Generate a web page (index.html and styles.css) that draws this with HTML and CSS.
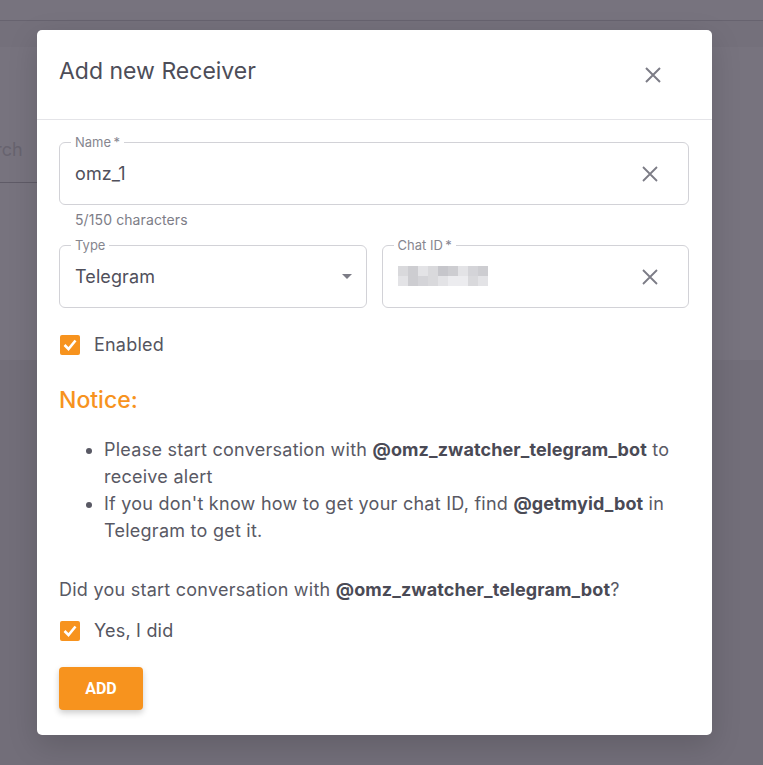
FILE: index.html
```html
<!DOCTYPE html>
<html>
<head>
<meta charset="utf-8">
<link rel="stylesheet" href="styles.css">
</head>
<body>
<div class="page">
  <div class="appbar"></div>
  <div class="subbar"></div>
  <div class="panel">
    <div class="search"><span class="search-text">Search</span></div>
  </div>
</div>

<div class="dialog">
  <div class="dialog-header">
    <h2 class="dialog-title">Add new Receiver</h2>
    <svg class="close-icon" width="24" height="24" viewBox="0 0 24 24"><path d="M5 5L19 19M19 5L5 19" stroke="#7c7c86" stroke-width="2" fill="none"/></svg>
  </div>
  <div class="dialog-body">
    <div class="field">
      <span class="field-label">Name&thinsp;*</span>
      <span class="field-value">omz_1</span>
      <svg class="clear-icon" width="20" height="20" viewBox="0 0 20 20"><path d="M3 3L17 17M17 3L3 17" stroke="#7c7c86" stroke-width="1.8" fill="none"/></svg>
    </div>
    <div class="helper">5/150 characters</div>
    <div class="field-row">
      <div class="field">
        <span class="field-label">Type</span>
        <span class="field-value">Telegram</span>
        <span class="select-arrow"></span>
      </div>
      <div class="field">
        <span class="field-label">Chat ID&thinsp;*</span>
        <span class="blur">
          <span class="px c1"></span><span class="px c2"></span><span class="px c3"></span><span class="px c1"></span><span class="px c4"></span><span class="px c2"></span><span class="px c3"></span><span class="px c5"></span><span class="px c2"></span>
          <span class="px c3"></span><span class="px c2"></span><span class="px c5"></span><span class="px c1"></span><span class="px c3"></span><span class="px c6"></span><span class="px c6"></span><span class="px c1"></span><span class="px c3"></span>
        </span>
        <svg class="clear-icon" width="20" height="20" viewBox="0 0 20 20"><path d="M3 3L17 17M17 3L3 17" stroke="#7c7c86" stroke-width="1.8" fill="none"/></svg>
      </div>
    </div>
    <label class="check-row first">
      <span class="checkbox"><svg width="20" height="20" viewBox="0 0 20 20"><path d="M4.5 10L8.5 14L15.5 5.5" stroke="#fff" stroke-width="2.6" fill="none"/></svg></span>
      <span class="check-label">Enabled</span>
    </label>
    <h3 class="notice">Notice:</h3>
    <ul class="notes">
      <li>Please start conversation with <b>@omz_zwatcher_telegram_bot</b> to receive alert</li>
      <li>If you don't know how to get your chat ID, find <b>@getmyid_bot</b> in Telegram to get it.</li>
    </ul>
    <p class="question">Did you start conversation with <b>@omz_zwatcher_telegram_bot</b>?</p>
    <label class="check-row second">
      <span class="checkbox"><svg width="20" height="20" viewBox="0 0 20 20"><path d="M4.5 10L8.5 14L15.5 5.5" stroke="#fff" stroke-width="2.6" fill="none"/></svg></span>
      <span class="check-label">Yes, I did</span>
    </label>
    <button class="add-btn">ADD</button>
  </div>
</div>
</body>
</html>
```
FILE: styles.css
```css
* { box-sizing: border-box; }
html, body { margin: 0; padding: 0; }
body {
  width: 763px;
  height: 765px;
  overflow: hidden;
  background: #726e79;
  font-family: Inter, "Noto Sans", sans-serif;
  position: relative;
}
.page { display: flex; flex-direction: column; }
.appbar { height: 21px; background: #77737e; border-bottom: 1px solid #67636f; }
.subbar { height: 26px; background: #74707b; }
.panel { height: 313px; background: #77737e; padding-top: 80px; }
.search { width: 40px; height: 56px; border-bottom: 1px solid #5f5b67; position: relative; }
.search-text {
  position: absolute; left: -37px; top: 12px;
  font-size: 18px; color: #67636f;
}

.dialog {
  position: absolute;
  left: 37px; top: 30px;
  width: 675px; height: 705px;
  background: #fff;
  border-radius: 5px;
  box-shadow: 0 10px 30px rgba(0,0,0,0.15);
}
.dialog-header {
  height: 90px;
  border-bottom: 1px solid #e4e4e8;
  display: flex;
  align-items: center;
  justify-content: space-between;
  padding: 0 47px 0 22px;
}
.dialog-title {
  margin: 0 0 8px;
  font-size: 23px;
  font-weight: 400;
  color: #4d4d58;
}
.close-icon { display: block; }

.dialog-body { padding: 22px 23px 0 22px; }
.field {
  position: relative;
  height: 63px;
  border: 1px solid #d2d2d7;
  border-radius: 6px;
  display: flex;
  align-items: center;
  padding: 0 28px 0 15px;
}
.field-label {
  position: absolute;
  left: 11px; top: -9px;
  padding: 0 4px;
  background: #fff;
  font-size: 13px;
  line-height: 16px;
  color: #86868f;
}
.field-value {
  flex: 1;
  font-size: 18px;
  letter-spacing: 0.1px;
  color: #50505b;
}
.clear-icon { display: block; }
.helper {
  margin: 7px 0 0 16px;
  font-size: 14px;
  line-height: 16px;
  letter-spacing: 0.1px;
  color: #7d7d87;
}
.field-row {
  display: grid;
  grid-template-columns: 1fr 1fr;
  gap: 15px;
  margin-top: 17px;
}
.select-arrow {
  width: 0; height: 0;
  border-left: 5px solid transparent;
  border-right: 5px solid transparent;
  border-top: 5px solid #7c7c86;
  margin-right: -14px;
}
.blur {
  flex: 1;
  display: flex;
  flex-wrap: wrap;
  width: 90px;
  max-width: 90px;
  height: 20px;
  margin-right: auto;
  margin-top: -2px;
}
.px { width: 10px; height: 10px; }
.c1 { background: #d9d9dc; }
.c2 { background: #cdcdd1; }
.c3 { background: #e3e3e6; }
.c4 { background: #c6c6cb; }
.c5 { background: #d4d4d8; }
.c6 { background: #ececef; }

.check-row {
  display: flex;
  align-items: center;
  gap: 14px;
  margin-left: 1px;
}
.check-row.first { margin-top: 26px; }
.check-row.second { margin-top: 17px; }
.checkbox {
  width: 20px; height: 20px;
  background: #f7931e;
  border-radius: 2px;
  display: block;
}
.checkbox svg { display: block; }
.check-label {
  font-size: 18px;
  letter-spacing: 0.2px;
  color: #555560;
}
.notice {
  margin: 31px 0 0;
  font-size: 23px;
  font-weight: 500;
  line-height: 28px;
  color: #f7931e;
}
.notes {
  margin: 22px 0 0;
  padding-left: 45px;
  font-size: 18px;
  line-height: 27px;
  letter-spacing: 0.25px;
  color: #595964;
}
.notes b, .question b { font-weight: 700; color: #4a4a55; letter-spacing: 0.1px; }
.question {
  margin: 32px 0 0;
  font-size: 18px;
  line-height: 27px;
  letter-spacing: 0.25px;
  color: #595964;
}
.add-btn {
  display: block;
  margin-top: 26px;
  width: 84px; height: 43px;
  border: none;
  border-radius: 4px;
  background: #f7931e;
  color: #fff;
  font-family: Roboto, Inter, sans-serif;
  font-weight: 700;
  font-size: 16px;
  box-shadow: 0 3px 6px rgba(0,0,0,0.2);
}
```
